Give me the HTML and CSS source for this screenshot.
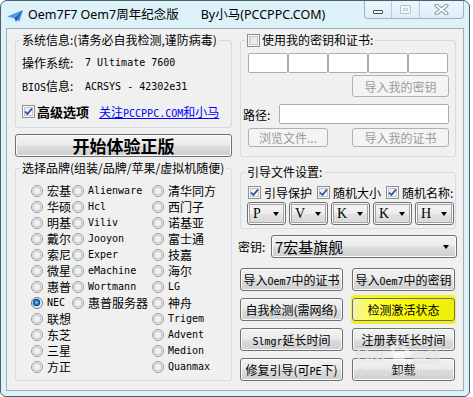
FILE: index.html
```html
<!DOCTYPE html>
<html lang="zh-CN">
<head>
    <meta charset="UTF-8">
    <meta name="viewport" content="width=device-width, initial-scale=1.0">
    <title>Oem7F7 Oem7周年纪念版</title>
    <link rel="stylesheet" href="styles.css">
</head>
<body>
    <div class="window">
        <!-- 标题栏 -->
        <div class="title-bar">
            <svg class="app-icon" width="16" height="12" viewBox="0 0 16 12">
                <path d="M0 6.5 L16 0 L12.5 11.5 L7.5 8.5 Z" fill="#4a9be0"/>
                <path d="M7.5 8.5 L16 0 L9 12 Z" fill="#1f5fa6"/>
            </svg>
            <span class="title-text">Oem7F7 Oem7周年纪念版</span>
            <span class="title-by">By小马(PCCPPC.COM)</span>
            <div class="caption-btns">
                <span class="cap cap-min"><i></i></span>
                <span class="cap cap-max"><i></i></span>
                <span class="cap cap-close">
                    <svg width="15" height="11" viewBox="0 0 15 11">
                        <path d="M2.5 1.5 L12.5 9.5 M12.5 1.5 L2.5 9.5" stroke="#8795a0" stroke-width="4" stroke-linecap="round"/>
                        <path d="M2.5 1.5 L12.5 9.5 M12.5 1.5 L2.5 9.5" stroke="#fff" stroke-width="2" stroke-linecap="round"/>
                    </svg>
                </span>
            </div>
        </div>

        <div class="client">
            <!-- 左侧 -->
            <div class="col-left">
                <fieldset class="group group-sys">
                    <legend>系统信息:(请务必自我检测,谨防病毒)</legend>
                    <div class="group-body">
                        <div class="info-row"><span class="info-label">操作系统:</span><span class="en">7 Ultimate 7600</span></div>
                        <div class="info-row"><span class="info-label"><span class="en">BIOS</span>信息:</span><span class="en">ACRSYS - 42302e31</span></div>
                        <div class="adv-row">
                            <span class="check on"><svg width="11" height="11" viewBox="0 0 11 11"><path d="M2 5.5 L4.4 8 L9 2.5" fill="none" stroke="#2b4f9e" stroke-width="1.8"/></svg></span>
                            <b class="adv-label">高级选项</b>
                            <a href="javascript:void(0);" class="follow">关注<span class="en">PCCPPC.COM</span>和小马</a>
                        </div>
                    </div>
                </fieldset>

                <button class="btn btn-start">开始体验正版</button>

                <fieldset class="group group-brand">
                    <legend>选择品牌(组装/品牌/苹果/虚拟机随便)</legend>
                    <div class="brand-grid">
                        <label class="radio-item"><span class="radio"></span>宏基</label>
                        <label class="radio-item"><span class="radio"></span><span class="en">Alienware</span></label>
                        <label class="radio-item"><span class="radio"></span>清华同方</label>

                        <label class="radio-item"><span class="radio"></span>华硕</label>
                        <label class="radio-item"><span class="radio"></span><span class="en">Hcl</span></label>
                        <label class="radio-item"><span class="radio"></span>西门子</label>

                        <label class="radio-item"><span class="radio"></span>明基</label>
                        <label class="radio-item"><span class="radio"></span><span class="en">Viliv</span></label>
                        <label class="radio-item"><span class="radio"></span>诺基亚</label>

                        <label class="radio-item"><span class="radio"></span>戴尔</label>
                        <label class="radio-item"><span class="radio"></span><span class="en">Jooyon</span></label>
                        <label class="radio-item"><span class="radio"></span>富士通</label>

                        <label class="radio-item"><span class="radio"></span>索尼</label>
                        <label class="radio-item"><span class="radio"></span><span class="en">Exper</span></label>
                        <label class="radio-item"><span class="radio"></span>技嘉</label>

                        <label class="radio-item"><span class="radio"></span>微星</label>
                        <label class="radio-item"><span class="radio"></span><span class="en">eMachine</span></label>
                        <label class="radio-item"><span class="radio"></span>海尔</label>

                        <label class="radio-item"><span class="radio"></span>惠普</label>
                        <label class="radio-item"><span class="radio"></span><span class="en">Wortmann</span></label>
                        <label class="radio-item"><span class="radio"></span><span class="en">LG</span></label>

                        <label class="radio-item"><span class="radio on"></span><span class="en">NEC</span></label>
                        <label class="radio-item"><span class="radio"></span>惠普服务器</label>
                        <label class="radio-item"><span class="radio"></span>神舟</label>

                        <label class="radio-item"><span class="radio"></span>联想</label>
                        <span></span>
                        <label class="radio-item"><span class="radio"></span><span class="en">Trigem</span></label>

                        <label class="radio-item"><span class="radio"></span>东芝</label>
                        <span></span>
                        <label class="radio-item"><span class="radio"></span><span class="en">Advent</span></label>

                        <label class="radio-item"><span class="radio"></span>三星</label>
                        <span></span>
                        <label class="radio-item"><span class="radio"></span><span class="en">Medion</span></label>

                        <label class="radio-item"><span class="radio"></span>方正</label>
                        <span></span>
                        <label class="radio-item"><span class="radio"></span><span class="en">Quanmax</span></label>
                    </div>
                </fieldset>
            </div>

            <!-- 右侧 -->
            <div class="col-right">
                <fieldset class="group group-key">
                    <legend><span class="check"></span>使用我的密钥和证书:</legend>
                    <div class="group-body">
                        <div class="key-row">
                            <input class="key-box" type="text">
                            <input class="key-box" type="text">
                            <input class="key-box" type="text">
                            <input class="key-box" type="text">
                            <input class="key-box" type="text">
                        </div>
                        <div class="btn-line">
                            <button class="btn btn-wide" disabled>导入我的密钥</button>
                        </div>
                        <div class="path-row">
                            <span class="path-label">路径:</span>
                            <input class="path-box" type="text">
                        </div>
                        <div class="btn-line split">
                            <button class="btn btn-browse" disabled>浏览文件...</button>
                            <button class="btn btn-wide" disabled>导入我的证书</button>
                        </div>
                    </div>
                </fieldset>

                <fieldset class="group group-boot">
                    <legend>引导文件设置:</legend>
                    <div class="group-body">
                        <div class="boot-checks">
                            <label class="check-item"><span class="check on"><svg width="11" height="11" viewBox="0 0 11 11"><path d="M2 5.5 L4.4 8 L9 2.5" fill="none" stroke="#2b4f9e" stroke-width="1.8"/></svg></span>引导保护</label>
                            <label class="check-item"><span class="check on"><svg width="11" height="11" viewBox="0 0 11 11"><path d="M2 5.5 L4.4 8 L9 2.5" fill="none" stroke="#2b4f9e" stroke-width="1.8"/></svg></span>随机大小</label>
                            <label class="check-item"><span class="check on"><svg width="11" height="11" viewBox="0 0 11 11"><path d="M2 5.5 L4.4 8 L9 2.5" fill="none" stroke="#2b4f9e" stroke-width="1.8"/></svg></span>随机名称:</label>
                        </div>
                        <div class="pick-row">
                            <div class="pick"><span>P</span><i class="arrow"></i></div>
                            <div class="pick"><span>V</span><i class="arrow"></i></div>
                            <div class="pick"><span>K</span><i class="arrow"></i></div>
                            <div class="pick"><span>K</span><i class="arrow"></i></div>
                            <div class="pick"><span>H</span><i class="arrow"></i></div>
                        </div>
                    </div>
                </fieldset>

                <div class="key-select-row">
                    <span class="key-select-label">密钥:</span>
                    <div class="combo"><span>7宏基旗舰</span><i class="arrow"></i></div>
                </div>

                <div class="action-grid">
                    <button class="btn">导入<span class="en">Oem7</span>中的证书</button>
                    <button class="btn">导入<span class="en">Oem7</span>中的密钥</button>
                    <button class="btn">自我检测(需网络)</button>
                    <button class="btn marked">检测激活状态</button>
                    <button class="btn"><span class="en">Slmgr</span>延长时间</button>
                    <button class="btn">注册表延长时间</button>
                    <button class="btn">修复引导(可<span class="en">PE</span>下)</button>
                    <button class="btn">卸载</button>
                </div>
            </div>
        </div>

        <!-- 水印 -->
        <div class="watermark">
            <span class="wm-bai">Bai</span>
            <svg class="wm-paw" width="22" height="20" viewBox="0 0 22 20">
                <ellipse cx="5" cy="6" rx="2.5" ry="3"/>
                <ellipse cx="10" cy="3" rx="2.5" ry="3"/>
                <ellipse cx="15.5" cy="4" rx="2.5" ry="3"/>
                <ellipse cx="19" cy="9" rx="2.2" ry="2.8"/>
                <path d="M5 17 C5 11 10 9 12 9 C15 9 18 12 17 16 C16 19 12 17 10 18 C7 19 5 19 5 17 Z"/>
            </svg>
            <span class="wm-jy">经验</span>
            <div class="wm-url">jingyan.baidu.com</div>
        </div>
    </div>
</body>
</html>
```

FILE: styles.css
```css
* {
    box-sizing: border-box;
}
body {
    margin: 0;
    background: #ffffff;
    font-family: "Noto Sans CJK SC", "Noto Sans", sans-serif;
    font-size: 12px;
    color: #000;
}
.en {
    font-family: "DejaVu Sans Mono", "Liberation Mono", monospace;
    font-size: 10px;
}

/* 窗口 */
.window {
    position: relative;
    width: 470px;
    height: 397px;
    border: 1px solid #4d5d69;
    border-radius: 7px 7px 6px 6px;
    background: #ddf1f9;
    padding: 0 5px 5px 5px;
    display: flex;
    flex-direction: column;
}
.title-bar {
    height: 27px;
    display: flex;
    align-items: flex-start;
    flex: none;
}
.app-icon {
    margin: 9px 0 0 1px;
    flex: none;
}
.title-text,
.title-by {
    margin-top: 5px;
    font-family: "Noto Sans", "Noto Sans CJK SC", sans-serif;
    font-size: 12.5px;
    line-height: 18px;
    white-space: nowrap;
}
.title-text {
    margin-left: 5px;
}
.title-by {
    margin-left: 22px;
}
.caption-btns {
    margin-left: auto;
    display: flex;
    height: 18px;
    border: 1px solid #9fb1be;
    border-top: none;
    border-radius: 0 0 4px 4px;
    background: linear-gradient(#eaf7fc, #dcf0f8);
    overflow: hidden;
}
.cap {
    display: flex;
    align-items: center;
    justify-content: center;
    height: 100%;
}
.cap + .cap {
    border-left: 1px solid #b9cad5;
}
.cap-min {
    width: 26px;
    align-items: flex-end;
    padding-bottom: 4px;
}
.cap-min i {
    display: block;
    width: 10px;
    height: 4px;
    border: 1px solid #3e4a52;
    border-radius: 1px;
    background: #fff;
}
.cap-max {
    width: 28px;
}
.cap-max i {
    display: block;
    width: 11px;
    height: 9px;
    border: 1px solid #b6c3cc;
    border-radius: 1px;
    box-shadow: inset 0 0 0 2px #eef8fc, inset 0 0 0 3px #c5d1d9;
}
.cap-close {
    width: 44px;
}

/* 客户区 */
.client {
    flex: 1;
    border: 1px solid #9fadb8;
    background: #f0f0f0;
    display: flex;
    gap: 6px;
    padding: 0 6px 0 8px;
}
.col-left {
    width: 217px;
    padding-top: 4px;
    flex: none;
}
.col-right {
    width: 219px;
    padding-top: 4px;
    flex: none;
}

/* 分组框 */
.group {
    margin: 0;
    padding: 0;
    border: 1px solid #d3dce2;
    border-radius: 3px;
    min-width: 0;
}
.group legend {
    margin-left: 4px;
    padding: 0 2px;
    font-size: 12px;
    line-height: 14px;
    height: 14px;
    display: flex;
    align-items: center;
    white-space: nowrap;
}
.group-sys {
    height: 95px;
}
.group-sys .group-body {
    padding: 8px 0 0 6px;
}
.info-row {
    height: 16px;
    line-height: 16px;
    display: flex;
    align-items: center;
    margin-bottom: 8px;
    white-space: nowrap;
}
.info-label {
    width: 63px;
    flex: none;
}
.adv-row {
    height: 16px;
    display: flex;
    align-items: center;
    white-space: nowrap;
}
.adv-label {
    margin-left: 2px;
    font-size: 13px;
    font-weight: bold;
}
.follow {
    margin-left: 10px;
    color: #0000ff;
    text-decoration: underline;
}
.follow .en {
    font-size: 10px;
}

/* 复选框 */
.check {
    display: inline-flex;
    align-items: center;
    justify-content: center;
    width: 13px;
    height: 13px;
    flex: none;
    border: 1px solid #8f8f8f;
    background: linear-gradient(135deg, #d3d7dc, #fbfbfb);
    box-shadow: inset 0 0 0 1px #f7f7f7, inset 0 0 0 2px #c2c7cc;
}
.check.on {
    background: linear-gradient(135deg, #dfe6ee, #ffffff);
}
.group-key legend .check {
    margin-right: 2px;
}

/* 按钮 */
.btn {
    font: inherit;
    font-size: 12px;
    color: #000;
    height: 23px;
    padding: 0;
    border: 1px solid #707070;
    border-radius: 3px;
    background: linear-gradient(#f2f2f2 0%, #ebebeb 48%, #dddddd 52%, #cfcfcf 100%);
    box-shadow: inset 0 0 0 1px #fbfbfb;
    white-space: nowrap;
    cursor: default;
}
.btn:disabled {
    border-color: #adb2b5;
    background: #f4f4f4;
    box-shadow: none;
    color: #9a9a9a;
}
.btn-start {
    display: block;
    width: 100%;
    margin-top: 6px;
    font-size: 17px;
    font-weight: bold;
    line-height: 20px;
}
.btn.marked {
    background: linear-gradient(90deg, #f3f3a8 0%, #ffff3c 22%, #f6f600 60%, #eeee10 100%);
    box-shadow: 0 -2px 0 1px #f4f422, 0 2px 0 1px #f0f020;
}

/* 品牌 */
.group-brand {
    margin-top: 4px;
    height: 220px;
}
.brand-grid {
    display: grid;
    grid-template-columns: 41px 80px 1fr;
    grid-auto-rows: 16px;
    padding: 8px 0 0 15px;
}
.radio-item {
    display: flex;
    align-items: center;
    gap: 4px;
    white-space: nowrap;
    line-height: 16px;
}
.radio {
    width: 12px;
    height: 12px;
    flex: none;
    border-radius: 50%;
    border: 1px solid #9a9a9a;
    background: radial-gradient(circle, #f4f4f4 0, #f4f4f4 2.5px, #cacaca 3.5px, #e8e8e8 4.5px, #fafafa 5px);
}
.radio.on {
    border-color: #5f7f9c;
    background: radial-gradient(circle at 45% 45%, #a6dcfd 0, #2a86d2 1.6px, #0e4a86 3.4px, #cfcfcf 4px, #ececec 4.6px, #fafafa 5px);
}

/* 密钥和证书 */
.group-key {
    margin: 0 1px 0 2px;
    height: 124px;
}
.group-key .group-body {
    padding: 6px 7px 0 7px;
}
.key-row {
    display: flex;
    height: 20px;
}
.key-box,
.path-box {
    width: 40px;
    height: 20px;
    margin: 0;
    padding: 0;
    border: 1px solid #abadb3;
    border-radius: 2px;
    background: #fff;
    outline: none;
}
.btn-line {
    display: flex;
    justify-content: flex-end;
    margin: 2px -1px 0 0;
}
.btn-wide {
    width: 97px;
    height: 22px;
}
.btn-line.split {
    justify-content: space-between;
    margin-top: 4px;
}
.btn-line.split .btn {
    height: 19px;
    line-height: 15px;
}
.btn-browse {
    width: 80px;
}
.path-row {
    display: flex;
    align-items: center;
    height: 20px;
    margin: 7px -1px 0 -5px;
}
.path-label {
    width: 36px;
    flex: none;
}
.path-box {
    flex: 1;
}

/* 引导文件设置 */
.group-boot {
    margin: 8px 1px 0 2px;
    height: 64px;
}
.group-boot .group-body {
    padding: 6px 0 0 7px;
}
.boot-checks {
    display: flex;
    align-items: center;
    gap: 5px;
    height: 14px;
}
.check-item {
    display: flex;
    align-items: center;
    gap: 3px;
    white-space: nowrap;
}
.pick-row {
    display: flex;
    gap: 3px;
    margin: 3px 0 0 -1px;
}
.pick {
    width: 39px;
    height: 23px;
    display: flex;
    align-items: center;
    justify-content: space-between;
    padding: 0 6px 0 5px;
    border: 1px solid #707070;
    border-radius: 3px;
    background: linear-gradient(#f6f6f6 0%, #ededed 50%, #e2e2e2 51%, #d8d8d8 100%);
    box-shadow: inset 0 0 0 1px #fafafa, inset 0 0 0 2px #a4a4a4;
    font-family: "Liberation Serif", serif;
    font-size: 14px;
}
.arrow {
    width: 0;
    height: 0;
    border-left: 3.5px solid transparent;
    border-right: 3.5px solid transparent;
    border-top: 4px solid #000;
}

/* 密钥选择 */
.key-select-row {
    display: flex;
    align-items: center;
    height: 23px;
    margin-top: 6px;
}
.key-select-label {
    width: 33px;
    flex: none;
}
.combo {
    flex: 1;
    height: 23px;
    display: flex;
    align-items: center;
    justify-content: space-between;
    padding: 0 7px 0 3px;
    border: 1px solid #707070;
    border-radius: 3px;
    background: linear-gradient(#f2f2f2 0%, #ebebeb 48%, #dddddd 52%, #cfcfcf 100%);
    box-shadow: inset 0 0 0 1px #fbfbfb;
    font-size: 15px;
}

/* 功能按钮 */
.action-grid {
    display: grid;
    grid-template-columns: 103px 103px;
    grid-auto-rows: 23px;
    column-gap: 9px;
    row-gap: 7px;
    margin: 10px 0 0 2px;
}

/* 水印 */
.watermark {
    position: absolute;
    left: 355px;
    top: 341px;
    width: 100px;
    color: rgba(255, 255, 255, 0.6);
    text-shadow: 0 0 1px rgba(110, 110, 110, 0.3);
    pointer-events: none;
}
.wm-bai {
    font-family: "Liberation Sans", sans-serif;
    font-weight: bold;
    font-size: 19px;
    vertical-align: bottom;
}
.wm-paw {
    fill: rgba(255, 255, 255, 0.55);
    vertical-align: bottom;
    margin-bottom: 4px;
}
.wm-jy {
    font-size: 14px;
    font-weight: bold;
    vertical-align: bottom;
}
.wm-url {
    font-family: "Liberation Sans", sans-serif;
    font-size: 11px;
    line-height: 12px;
    margin-left: 3px;
}
```
